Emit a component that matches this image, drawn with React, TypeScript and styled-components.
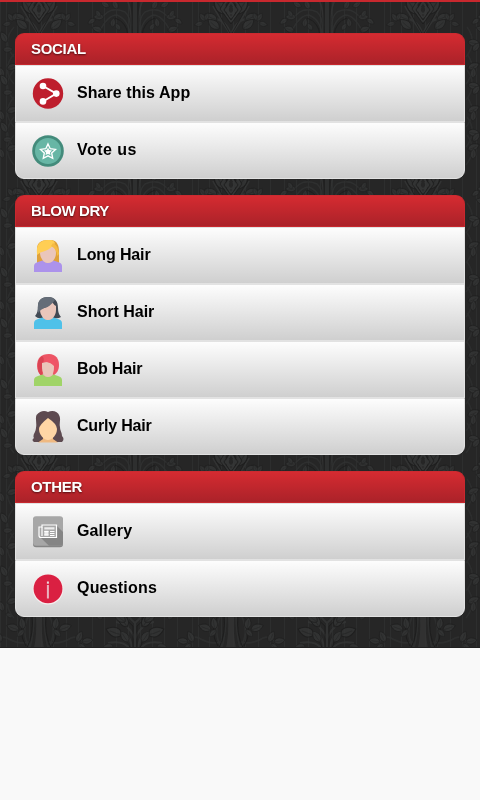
import React from "react";
import styled, { createGlobalStyle } from "styled-components";

const GlobalStyle = createGlobalStyle`
  * { box-sizing: border-box; }
  html, body { margin: 0; padding: 0; background: #f9f9f9; }
  body { font-family: "Liberation Sans", Arial, sans-serif; overflow: hidden; }
`;

const Page = styled.main`
  min-height: 800px;
  background: #f9f9f9;
`;

const Panel = styled.div`
  position: relative;
  isolation: isolate;
  height: 648px;
  border-top: 2px solid #c8282e;
  background: #262626;
  padding: 31px 15px 31px;
  display: flex;
  flex-direction: column;
  gap: 16px;
`;

const Wallpaper = styled.svg`
  position: absolute;
  inset: 0;
  z-index: -1;
`;

const Group = styled.section`
  display: block;
`;

const GroupHeader = styled.h2<{ $tracking: number }>`
  margin: 0;
  height: 32px;
  padding-left: 15px;
  line-height: 30px;
  font-size: 15px;
  font-weight: bold;
  letter-spacing: ${(p) => p.$tracking}px;
  color: #fff;
  text-shadow: 0 1px 2px rgba(0, 0, 0, 0.6);
  background: linear-gradient(#d52b31, #ab2229);
  border: 1px solid #c8282e;
  border-top-color: #cc2a30;
  border-radius: 9px 9px 0 0;
`;

const List = styled.ul`
  margin: 0;
  padding: 0;
  list-style: none;
`;

const Row = styled.li`
  height: 57px;
  display: flex;
  align-items: center;
  padding: 0 16px;
  gap: 13px;
  border: 1px solid #e2e2e2;
  background: linear-gradient(#fdfdfd, #cfcfcf) padding-box, #e2e2e2;
  &:last-child { border-radius: 0 0 9px 9px; }
`;

const Icon = styled.svg`
  width: 32px;
  height: 32px;
  flex: none;
  display: block;
`;

const Label = styled.span<{ $tracking: number }>`
  font-size: 16px;
  font-weight: bold;
  line-height: 20px;
  letter-spacing: ${(p) => p.$tracking}px;
  color: #000;
  padding-bottom: 2px;
`;

type LeafSpec = [number, number, number, number];

const palmette: LeafSpec[] = [
  [5, 12, 32, 1.5], [8, 0, 38, 1.25], [14, 18, 62, 1.05], [12, 27, 45, 1.1],
  [26, 19, 30, 0.7], [28, 21, 100, 0.65], [26, 18, -30, 0.6],
];
const branches: LeafSpec[] = [
  [18, 7, 20, 0.75], [26, 5, 55, 0.7], [31, 15, 85, 0.8], [35, 15, 25, 0.6],
  [40, 17, 120, 0.65], [23, 25, -15, 0.7], [33, 29, 65, 0.8], [15, 28, 30, 0.6],
];
const fronds: LeafSpec[] = [
  [8, 10, 25, 1.2], [13, 18, 65, 1.3], [10, 5, 45, 1.05], [22, 29, 95, 0.8],
  [7, 25, 28, 1], [33, 2, 45, 0.6],
];
const blossoms: LeafSpec[] = [
  [16, 12, 5, 0.9], [20, 13, 65, 1], [15, 13, 130, 0.7], [38, 25, 20, 0.9],
  [43, 25, 75, 0.85], [40, 27, 130, 0.75], [26, 0, 60, 0.6],
];

const Leaf = ({ at: [x, y, r, s] }: { at: LeafSpec }) => (
  <g transform={`translate(${x} ${y}) rotate(${r}) scale(${s})`}>
    <path d="M0 0C-5-3-4-9 1-13C5-8 5-3 0 0Z" fill="#353636" stroke="#1f1f1f" strokeWidth=".8" />
    <path d="M0-1Q1-5 1-10" stroke="#2a2b2b" fill="none" strokeWidth=".8" />
  </g>
);

const Mirrored = ({ x, y, children }: { x: number; y: number; children: React.ReactNode }) => (
  <g transform={`translate(${x} ${y})`}>
    <g>{children}</g>
    <g transform="scale(-1 1)">{children}</g>
  </g>
);

const PalmetteArt = () => (
  <>
    <path d="M0 33Q9 20 18 4M1 30Q5 20 14 17" stroke="#353636" strokeWidth="2" fill="none" />
    <path d="M0 33Q7 21 17 3" stroke="#1c1c1c" strokeWidth=".8" fill="none" />
    {palmette.map((l, i) => <Leaf key={i} at={l} />)}
    <path d="M0 20L9 7L0-9M0 16L5 8L0 0M0 12Q5 9 2 5" stroke="#373838" strokeWidth="1.8" fill="none" />
    <path d="M0 22L11 7L2-8M0 18L7 8L0-3" stroke="#1d1d1d" strokeWidth=".8" fill="none" />
  </>
);

const BranchArt = () => (
  <>
    <path d="M1 34V-2M4 34Q2 10 8-2" stroke="#343535" strokeWidth="1.6" fill="none" />
    <path d="M5 34Q3 16 10 10Q25 3 34 17M5 34Q6 18 18 13Q28 13 36 31" stroke="#313232" strokeWidth="1.4" fill="none" />
    <path d="M7 34Q8 20 20 16M3 34V-2" stroke="#1b1b1b" strokeWidth=".8" fill="none" />
    {branches.map((l, i) => <Leaf key={i} at={l} />)}
  </>
);

const FrondArt = () => (
  <>
    <path d="M0 31V6Q4 3 7-2M0 22Q6 7 19 5M3 31Q5 14 18 14M6 31Q12 23 27 26" stroke="#353636" strokeWidth="2" fill="none" />
    <path d="M2 31V9Q8 5 12-3M5 31Q8 18 20 16" stroke="#1b1b1b" strokeWidth=".8" fill="none" />
    {fronds.map((l, i) => <Leaf key={i} at={l} />)}
  </>
);

const TrunkArt = () => (
  <>
    <path d="M0-2H3Q2 18 5 31H0Z" fill="#343535" />
    <path d="M5-2Q5 15 9 31M10-2Q19 16 9 31M9 25Q21 28 32 21Q44 17 44 31" stroke="#303131" strokeWidth="1.6" fill="none" />
    <path d="M7-2Q5 17 12 31M13-2Q22 15 13 29" stroke="#1b1b1b" strokeWidth=".9" fill="none" />
    {blossoms.map((l, i) => <Leaf key={i} at={l} />)}
  </>
);

const stripes = [0, 6, 17, 29, 41, 53, 66, 78, 92, 104, 116, 128, 140, 152, 164, 177];
const repeats = [0, 192, 384];
const sideHeights = [42, 69, 85, 112, 132, 150, 218, 248, 277, 302, 328, 357, 389, 416, 438, 494, 523, 548, 576, 603];

const DamaskWallpaper = () => (
  <Wallpaper width="480" height="646" viewBox="0 2 480 646" aria-hidden="true">
    {repeats.map((r) => (
      <g key={r}>
        {stripes.map((x) => <path key={x} d={`M${r + x + 0.5} 0V648`} stroke="#2d2e2e" />)}
      </g>
    ))}
    <g opacity="0.85">
      {repeats.map((r) => (
        <g key={r}>
          <Mirrored x={r + 39} y={2}><PalmetteArt /></Mirrored>
          <Mirrored x={r + 135} y={2}><BranchArt /></Mirrored>
          <Mirrored x={r + 39} y={177}><PalmetteArt /></Mirrored>
          <Mirrored x={r + 135} y={174}><BranchArt /></Mirrored>
          <Mirrored x={r + 39} y={454}><PalmetteArt /></Mirrored>
          <Mirrored x={r + 135} y={449}><BranchArt /></Mirrored>
          <Mirrored x={r - 57} y={617}><FrondArt /></Mirrored>
          <Mirrored x={r + 39} y={617}><TrunkArt /></Mirrored>
        </g>
      ))}
      {sideHeights.map((y, i) => (
        <g key={y}>
          <path d={`M14 ${y - 15}Q1 ${y} 14 ${y + 15}M467 ${y - 15}Q478 ${y} 466 ${y + 15}`} fill="none" stroke="#2f3030" strokeWidth="1.5" />
          <Leaf at={[7, y, i % 2 ? 65 : -35, 0.9]} />
          <Leaf at={[3, y + 8, i % 2 ? -20 : 80, 0.75]} />
          <Leaf at={[468, y, i % 2 ? 60 : 95, 0.95]} />
          <Leaf at={[473, y + 9, i % 2 ? 0 : 35, 0.8]} />
        </g>
      ))}
    </g>
    <path d="M0 647.5H480" stroke="#202020" />
  </Wallpaper>
);

const ShareIcon = () => (
  <Icon viewBox="0 0 32 32">
    <circle cx="16" cy="15.5" r="15.2" fill="#be1e2d" />
    <path d="M11 8L24.3 15.6L11 23.5" fill="none" stroke="#fff" strokeWidth="1.9" />
    <circle cx="11" cy="8" r="3.3" fill="#fff" />
    <circle cx="24.3" cy="15.6" r="3.3" fill="#fff" />
    <circle cx="11" cy="23.4" r="3.3" fill="#fff" />
  </Icon>
);

const VoteIcon = () => (
  <Icon viewBox="0 0 32 32">
    <circle cx="16" cy="16" r="15.8" fill="#438b7b" />
    <circle cx="16" cy="16" r="13" fill="#67b6a5" />
    <path d="M16 9L18.2 13.7L23.5 14.4L19.7 18.1L20.7 23.3L16 20.9L11.3 23.3L12.3 18.1L8.5 14.4L13.8 13.7Z" fill="none" stroke="#fff" strokeWidth="1.4" />
    <path d="M16 12.5L17.2 15L20 15.5L18 17.5L18.5 20L16 18.9L13.5 20L14 17.5L12 15.5L14.8 15Z" fill="#fff" />
  </Icon>
);

const LongHairIcon = () => (
  <Icon viewBox="0 0 32 32">
    <path d="M5 23V9C5 3 9 0 16 0C24-1 27 4 27 11V25H5Z" fill="#dfa13a" />
    <path d="M2 32V26Q2 23 6 22L12 20H20L26 22Q30 23 30 26V32Z" fill="#ac92eb" />
    <path d="M11 19H21V21Q16 25 11 21Z" fill="#e1b7a7" />
    <path d="M8 11Q15 10 20 4Q24 7 24 13C24 19 20 23 16 23C12 23 8 18 8 13Z" fill="#eac6bb" />
    <path d="M5 13C4 5 8 0 16 0Q21-1 23 3Q19 9 13 11Q8 12 5 15Z" fill="#ffce54" />
    <path d="M21 3Q26 5 27 14L25 16Q25 9 19 6Z" fill="#f6bb43" />
  </Icon>
);

const ShortHairIcon = () => (
  <Icon viewBox="0 0 32 32">
    <path d="M6 9C6 3 10 0 16 0C23 0 26 4 26 11Q26 17 29 20Q26 22 22 21H10Q6 22 3 19Q6 16 6 9Z" fill="#434a54" />
    <path d="M2 32V26Q2 23 6 22L12 20H20L26 22Q30 23 30 26V32Z" fill="#4fc1e9" />
    <path d="M11 19H21V21Q16 25 11 21Z" fill="#dfb6a9" />
    <path d="M8 12Q16 11 20 5Q22 8 24 9V13C24 19 20 23 16 23C12 23 8 18 8 13Z" fill="#eac6bb" />
    <path d="M6 14C5 5 8 0 16 0Q21 0 23 3Q18 10 12 11Q8 13 6 16Z" fill="#656d78" />
  </Icon>
);

const BobHairIcon = () => (
  <Icon viewBox="0 0 32 32">
    <path d="M5 12C5 4 9 0 17 0C24 0 27 5 27 11C27 16 25 19 22 21L10 22Q5 18 5 12Z" fill="#ed5565" />
    <path d="M6 14Q5 5 10 2Q13 4 11 9L10 22Q6 20 6 14Z" fill="#da4453" />
    <path d="M2 32V26Q2 23 6 22L12 20H20L26 22Q30 23 30 26V32Z" fill="#a0d468" />
    <path d="M11 18H21V21Q16 25 11 21Z" fill="#dfb6a9" />
    <path d="M10 9Q17 6 22 11V13C22 19 20 23 16 23C12 23 10 18 10 13Z" fill="#eac6bb" />
    <path d="M10 9Q16 6 22 12L24 9L18 4Z" fill="#f05567" />
  </Icon>
);

const CurlyHairIcon = () => (
  <Icon viewBox="0 0 32 32">
    <path d="M16 1C20-1 26 0 27.5 5C29 9 27 12 28 16C28 20 30 21 30 25Q33 28 30 31H2Q-1 29 2 27C0 24 4 21 4 17C5 12 3 8 4.5 4C8 0 12-1 16 1Z" fill="#5d4a50" />
    <path d="M11 25H21V28L26 31.5H6L11 28Z" fill="#efb981" />
    <path d="M7 18Q7 14 16 7Q25 13 25 18C25 24 20 29 16 29C12 29 7 24 7 18Z" fill="#ffd6a5" />
  </Icon>
);

const GalleryIcon = () => (
  <Icon viewBox="0 0 32 32">
    <rect x="1" y="1.3" width="30" height="30" rx="3" fill="#858585" />
    <rect x="1" y="0.3" width="30" height="29.5" rx="3" fill="#a7a7a7" />
    <path d="M8 21L17 29.8H28Q31 29.8 31 27V16L24 9Z" fill="#858585" />
    <path d="M10 9H24.5V21.5H9Q7 21.5 7 19.5V11H10Z" fill="#a7a7a7" stroke="#fff" strokeWidth="1.2" />
    <path d="M10 11V20M12.3 15.5H16.5M12.3 19H16.5M18 15.5H22.5M18 17.5H22.5M18 19.5H22.5" stroke="#fff" strokeWidth="1.2" />
    <path d="M12.3 14.8H16.5V19.5H12.3ZM12.3 11.2H22.5V13.4H12.3Z" fill="#fff" opacity=".78" />
  </Icon>
);

const QuestionsIcon = () => (
  <Icon viewBox="0 0 32 32">
    <circle cx="16" cy="16" r="15.4" fill="#f6eeee" />
    <circle cx="16" cy="15.8" r="14.4" fill="#da2042" />
    <rect x="14.9" y="8.5" width="2" height="2.2" fill="#ead8dc" />
    <rect x="14.9" y="12" width="2" height="13.5" fill="#e9b3be" />
  </Icon>
);

interface Entry {
  label: string;
  tracking: number;
  Glyph: React.ComponentType;
}

const groups: { title: string; tracking: number; items: Entry[] }[] = [
  {
    title: "SOCIAL",
    tracking: -0.3,
    items: [
      { label: "Share this App", tracking: 0.07, Glyph: ShareIcon },
      { label: "Vote us", tracking: 0.48, Glyph: VoteIcon },
    ],
  },
  {
    title: "BLOW DRY",
    tracking: -0.4,
    items: [
      { label: "Long Hair", tracking: -0.13, Glyph: LongHairIcon },
      { label: "Short Hair", tracking: 0, Glyph: ShortHairIcon },
      { label: "Bob Hair", tracking: -0.17, Glyph: BobHairIcon },
      { label: "Curly Hair", tracking: -0.2, Glyph: CurlyHairIcon },
    ],
  },
  {
    title: "OTHER",
    tracking: -0.3,
    items: [
      { label: "Gallery", tracking: 0.13, Glyph: GalleryIcon },
      { label: "Questions", tracking: 0.2, Glyph: QuestionsIcon },
    ],
  },
];

export default function App() {
  return (
    <Page>
      <GlobalStyle />
      <Panel>
        <DamaskWallpaper />
        {groups.map((group) => (
          <Group key={group.title}>
            <GroupHeader $tracking={group.tracking}>{group.title}</GroupHeader>
            <List>
              {group.items.map(({ label, tracking, Glyph }) => (
                <Row key={label}>
                  <Glyph />
                  <Label $tracking={tracking}>{label}</Label>
                </Row>
              ))}
            </List>
          </Group>
        ))}
      </Panel>
    </Page>
  );
}
